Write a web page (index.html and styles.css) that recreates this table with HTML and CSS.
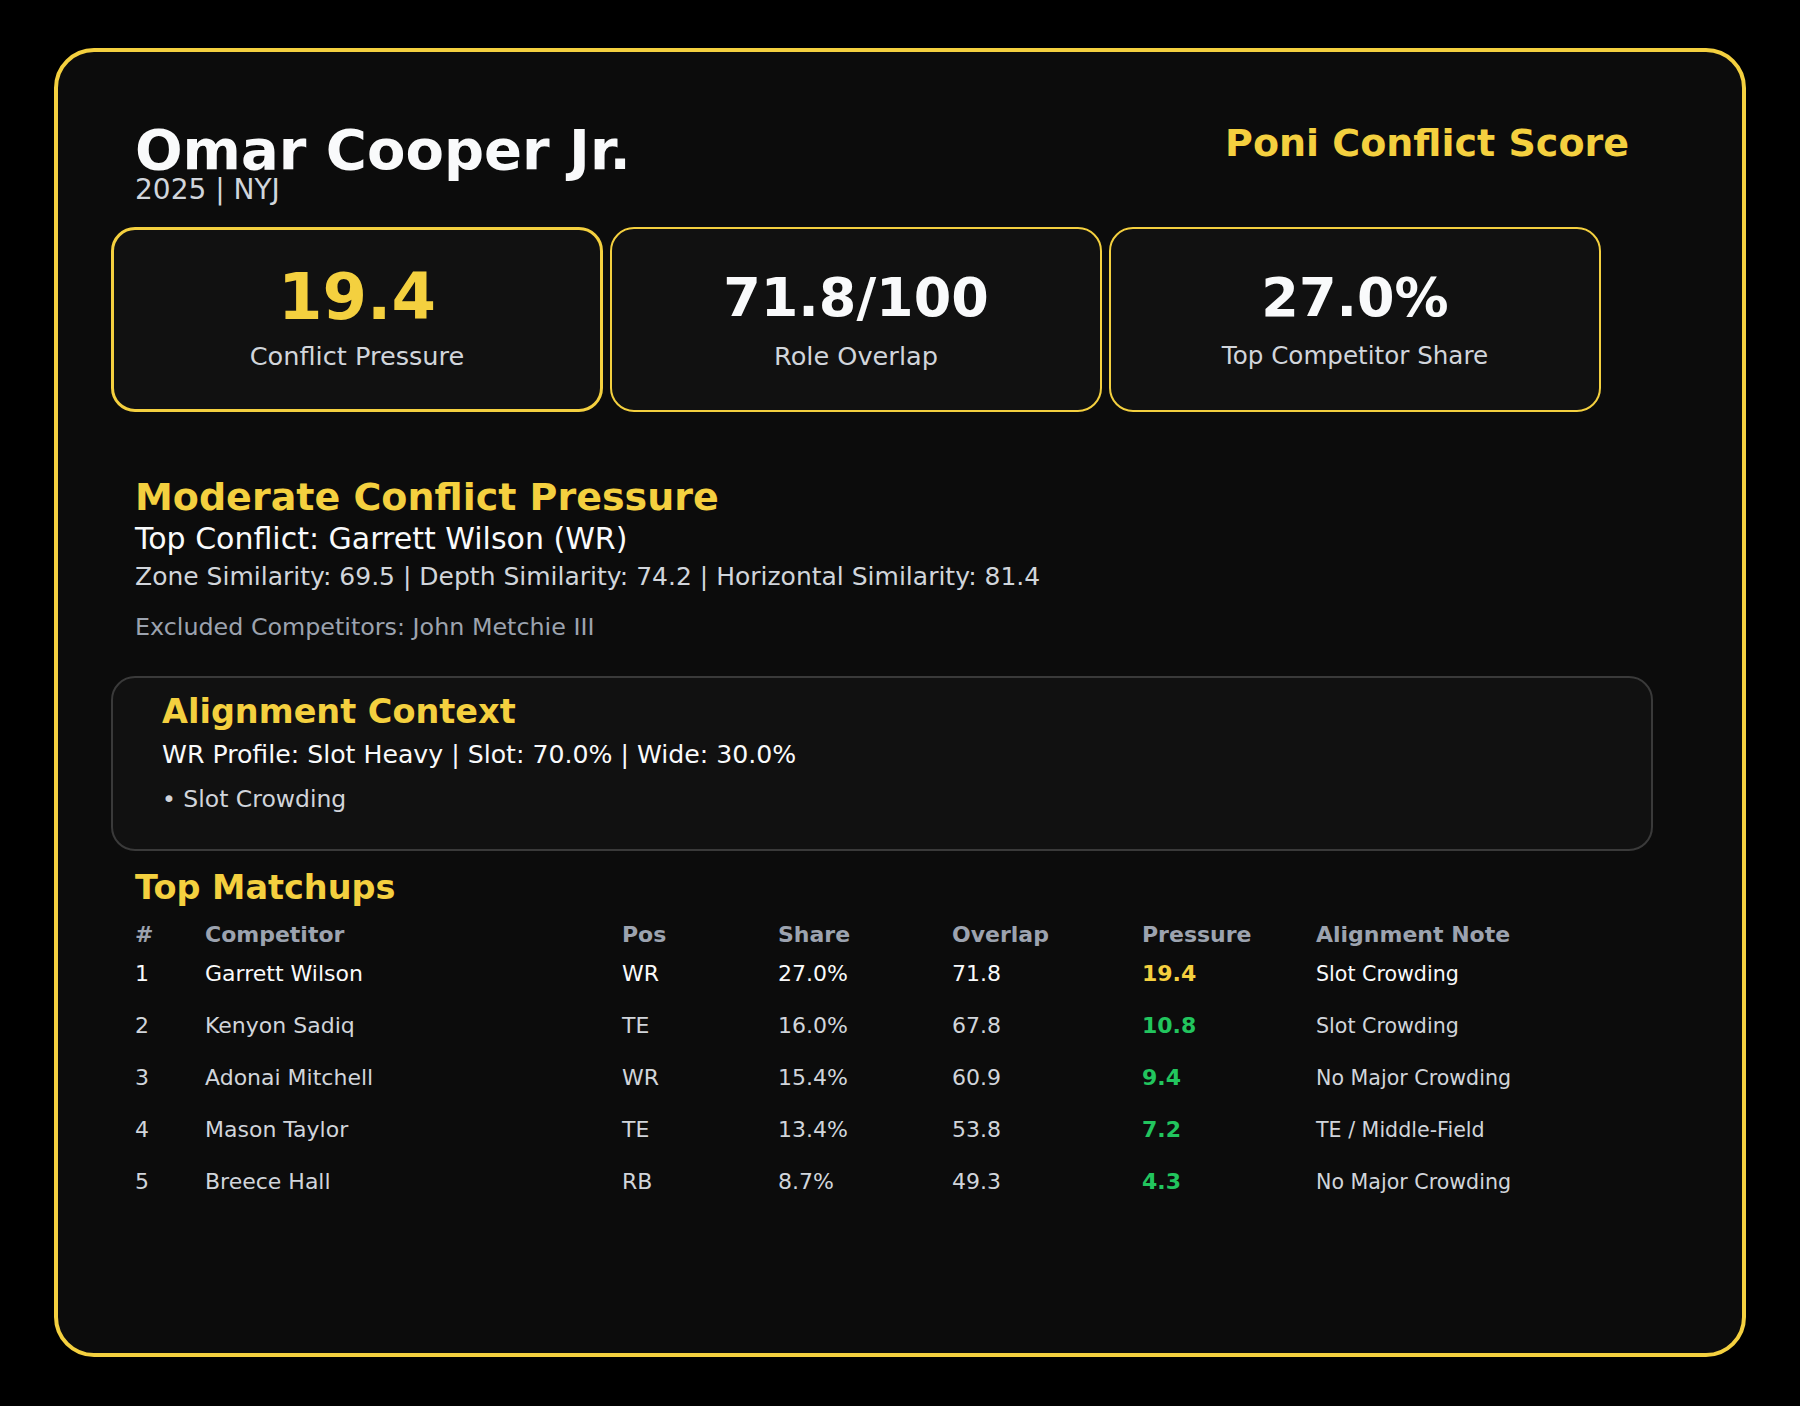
FILE: index.html
```html
<!DOCTYPE html>
<html lang="en">
<head>
<meta charset="utf-8">
<title>Omar Cooper Jr. – Poni Conflict Score</title>
<link rel="stylesheet" href="styles.css">
</head>
<body>
<main class="card">
  <div class="content">
    <header class="header">
      <div class="identity">
        <h1 class="player-name">Omar Cooper Jr.</h1>
        <div class="player-meta">2025 | NYJ</div>
      </div>
      <div class="brand">Poni Conflict Score</div>
    </header>

    <section class="metrics">
      <div class="metric metric-primary">
        <div class="metric-value">19.4</div>
        <div class="metric-label">Conflict Pressure</div>
      </div>
      <div class="metric">
        <div class="metric-value">71.8/100</div>
        <div class="metric-label">Role Overlap</div>
      </div>
      <div class="metric">
        <div class="metric-value">27.0%</div>
        <div class="metric-label metric-label-long">Top Competitor Share</div>
      </div>
    </section>

    <section class="summary">
      <h2 class="summary-title">Moderate Conflict Pressure</h2>
      <div class="summary-top">Top Conflict: Garrett Wilson (WR)</div>
      <div class="summary-sim">Zone Similarity: 69.5 | Depth Similarity: 74.2 | Horizontal Similarity: 81.4</div>
      <div class="summary-excluded">Excluded Competitors: John Metchie III</div>
    </section>

    <section class="alignment">
      <h3 class="alignment-title">Alignment Context</h3>
      <div class="alignment-profile">WR Profile: Slot Heavy | Slot: 70.0% | Wide: 30.0%</div>
      <div class="alignment-flag">• Slot Crowding</div>
    </section>

    <section class="matchups">
      <h3 class="matchups-title">Top Matchups</h3>
      <table class="matchup-table">
        <thead>
          <tr>
            <th class="c-rank">#</th>
            <th class="c-name">Competitor</th>
            <th class="c-pos">Pos</th>
            <th class="c-share">Share</th>
            <th class="c-overlap">Overlap</th>
            <th class="c-pressure">Pressure</th>
            <th class="c-note">Alignment Note</th>
          </tr>
        </thead>
        <tbody>
          <tr class="row-top">
            <td>1</td><td>Garrett Wilson</td><td>WR</td><td>27.0%</td><td>71.8</td>
            <td class="pressure pressure-high">19.4</td><td class="note">Slot Crowding</td>
          </tr>
          <tr>
            <td>2</td><td>Kenyon Sadiq</td><td>TE</td><td>16.0%</td><td>67.8</td>
            <td class="pressure pressure-low">10.8</td><td class="note">Slot Crowding</td>
          </tr>
          <tr>
            <td>3</td><td>Adonai Mitchell</td><td>WR</td><td>15.4%</td><td>60.9</td>
            <td class="pressure pressure-low">9.4</td><td class="note">No Major Crowding</td>
          </tr>
          <tr>
            <td>4</td><td>Mason Taylor</td><td>TE</td><td>13.4%</td><td>53.8</td>
            <td class="pressure pressure-low">7.2</td><td class="note">TE / Middle-Field</td>
          </tr>
          <tr>
            <td>5</td><td>Breece Hall</td><td>RB</td><td>8.7%</td><td>49.3</td>
            <td class="pressure pressure-low">4.3</td><td class="note">No Major Crowding</td>
          </tr>
        </tbody>
      </table>
    </section>
  </div>
</main>
</body>
</html>
```

FILE: styles.css
```css
* {
  box-sizing: border-box;
}

html, body {
  background: #000000;
}

body {
  margin: 0;
  padding: 48px 54px 49px;
  font-family: "DejaVu Sans", "Liberation Sans", sans-serif;
  color: #f9fafb;
}

.card {
  height: 1309px;
  border: 4px solid #f4d03f;
  border-radius: 40px;
  background: #0c0c0c;
  padding: 70px 0 0 53px;
}

.content {
  width: 1542px;
}

/* Header */
.header {
  display: flex;
  justify-content: space-between;
  align-items: flex-start;
  padding: 0 24px;
}

.player-name {
  margin: 0;
  font-size: 56px;
  line-height: 56px;
  font-weight: 700;
  color: #f9fafb;
}

.player-meta {
  font-size: 28px;
  line-height: 24px;
  color: #d1d5db;
}

.brand {
  margin-top: 2px;
  font-size: 38px;
  line-height: 38px;
  font-weight: 700;
  color: #f4d03f;
}

/* Metric cards */
.metrics {
  display: grid;
  grid-template-columns: repeat(3, 492px);
  column-gap: 7px;
  margin-top: 25px;
}

.metric {
  height: 185px;
  border: 2px solid #f4d03f;
  border-radius: 24px;
  background: #111111;
  padding-top: 33px;
  text-align: center;
}

.metric-primary {
  border-width: 3px;
  padding-top: 31px;
}

.metric-value {
  font-size: 54px;
  line-height: 72px;
  font-weight: 700;
  color: #f9fafb;
}

.metric-primary .metric-value {
  font-size: 64px;
  color: #f4d03f;
}

.metric-label {
  margin-top: 8px;
  font-size: 25.6px;
  line-height: 28px;
  color: #d1d5db;
}

.metric-primary .metric-label {
  margin-top: 9px;
}

.metric-label-long {
  font-size: 24.6px;
}

/* Summary */
.summary {
  margin-top: 63px;
  padding: 0 24px;
}

.summary-title {
  margin: 0;
  font-size: 38px;
  line-height: 44px;
  font-weight: 700;
  color: #f4d03f;
}

.summary-top {
  margin-top: 2px;
  font-size: 30px;
  line-height: 35px;
  color: #f9fafb;
}

.summary-sim {
  margin-top: 6px;
  font-size: 25px;
  line-height: 29px;
  color: #d1d5db;
}

.summary-excluded {
  margin-top: 22px;
  font-size: 23.8px;
  line-height: 28px;
  color: #9ca3af;
}

/* Alignment box */
.alignment {
  margin-top: 35px;
  border: 2px solid #3a3a3a;
  border-radius: 24px;
  background: #111111;
  padding: 15px 49px 36px;
}

.alignment-title {
  margin: 0;
  font-size: 33.5px;
  line-height: 38px;
  font-weight: 700;
  color: #f4d03f;
}

.alignment-profile {
  margin-top: 9px;
  font-size: 25.2px;
  line-height: 29px;
  color: #f9fafb;
}

.alignment-flag {
  margin-top: 16px;
  font-size: 23.5px;
  line-height: 28px;
  color: #d1d5db;
}

/* Matchups */
.matchups {
  margin-top: 18px;
  padding: 0 24px;
}

.matchups-title {
  margin: 0;
  font-size: 33.5px;
  line-height: 38px;
  font-weight: 700;
  color: #f4d03f;
}

.matchup-table {
  margin-top: 15px;
  width: 1494px;
  border-collapse: collapse;
  table-layout: fixed;
}

.matchup-table th,
.matchup-table td {
  padding: 0;
  text-align: left;
  white-space: nowrap;
}

.matchup-table th {
  font-size: 22px;
  line-height: 26px;
  font-weight: 700;
  color: #9ca3af;
}

.matchup-table td {
  font-size: 22px;
  line-height: 51px;
  color: #d1d5db;
  vertical-align: baseline;
}

.c-rank { width: 70px; }
.c-name { width: 417px; }
.c-pos { width: 156px; }
.c-share { width: 174px; }
.c-overlap { width: 190px; }
.c-pressure { width: 174px; }
.c-note { width: auto; }

.matchup-table .row-top td {
  color: #f9fafb;
}

.matchup-table td.pressure {
  font-weight: 700;
}

.matchup-table td.pressure-high {
  color: #f4d03f;
}

.matchup-table td.pressure-low {
  color: #22c55e;
}

.matchup-table td.note {
  font-size: 20.6px;
}
```
